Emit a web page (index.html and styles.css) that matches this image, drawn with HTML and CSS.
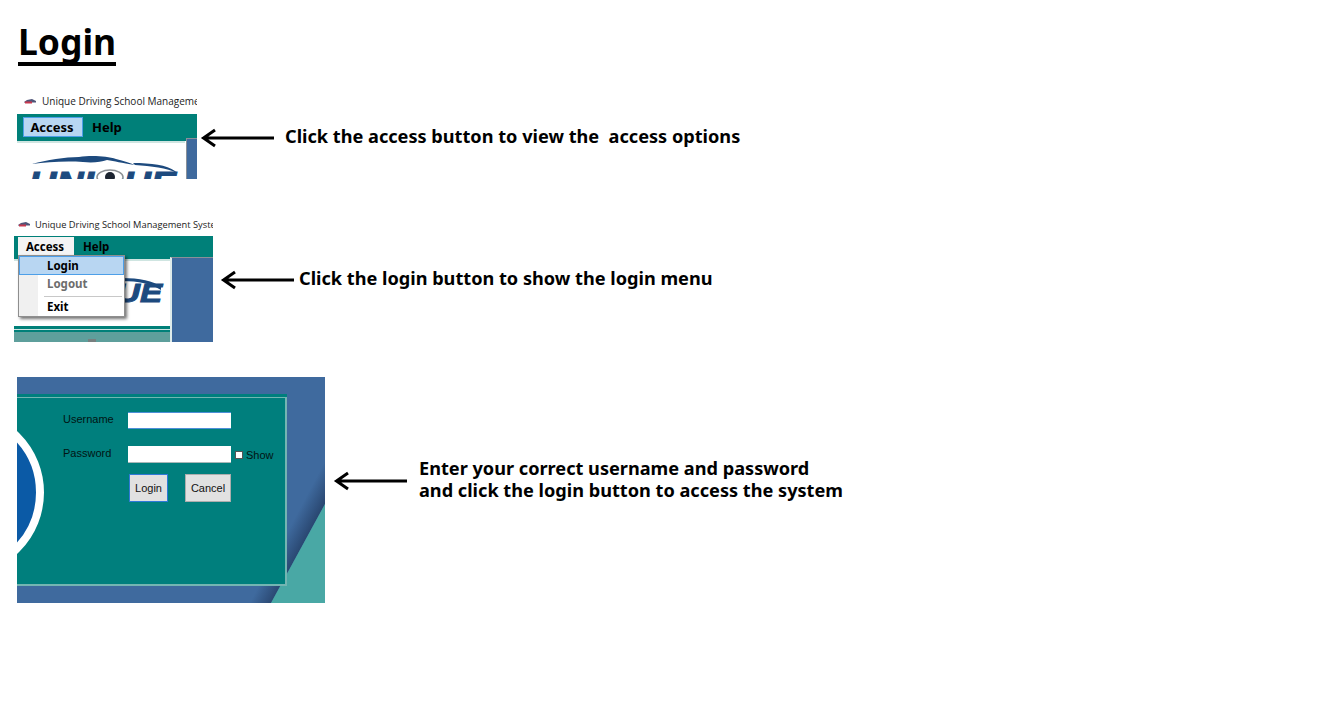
FILE: index.html
```html
<!DOCTYPE html>
<html lang="en">
<head>
<meta charset="utf-8">
<title>Login</title>
<link rel="stylesheet" href="styles.css">
</head>
<body>
<main class="page">
  <h1 class="title">Login</h1>

  <section class="step step-one">
    <div class="shot shot-access">
      <div class="titlebar">
        <svg class="app-icon" width="12" height="5" viewBox="0 0 12 5"><path d="M0 3 3 1 8 0 12 2V3.500H0Z" fill="#4f5578"/><path d="M1 2.500H8V4.500H1Z" fill="#c8384e"/></svg>
        <span class="titlebar-text">Unique Driving School Management System</span>
      </div>
      <div class="menubar">
        <span class="menu-item menu-item-hot">Access</span>
        <span class="menu-item">Help</span>
      </div>
      <div class="workspace">
        <div class="logo-panel">
          <svg class="logo" width="168" height="36" viewBox="0 0 168 36">
            <path d="M15 21C30 17 48 14 62 14C74 12 90 13 99 16C107 18 113 20 118 22C104 20 98 18 90 17C84 19 76 20 66 19C48 18 30 19 15 21Z" fill="#1d4a7e"/>
            <path d="M116 20C134 20 150 22 158 28L160 30C150 25 134 23 118 22Z" fill="#1d4a7e"/>
            <text class="logo-word" x="12" y="51" textLength="147" lengthAdjust="spacingAndGlyphs">UNIQUE</text>
            <ellipse cx="93" cy="34" rx="13" ry="7" fill="#fff" stroke="#8b8f93" stroke-width="1.500"/>
            <circle cx="93" cy="34" r="5" fill="#1c2430"/>
          </svg>
        </div>
        <div class="side-panel side-panel-small"></div>
      </div>
    </div>
    <svg class="arrow arrow-one" width="74" height="20" viewBox="0 0 74 20"><path d="M3 10H74M15 2 3.500 10 15 18" fill="none" stroke="#000" stroke-width="3"/></svg>
    <p class="note note-one">Click the access button to view the&nbsp; access options</p>
  </section>

  <section class="step step-two">
    <div class="shot shot-menu">
      <div class="titlebar titlebar-wide">
        <svg class="app-icon" width="12" height="5" viewBox="0 0 12 5"><path d="M0 3 3 1 8 0 12 2V3.500H0Z" fill="#4f5578"/><path d="M1 2.500H8V4.500H1Z" fill="#c8384e"/></svg>
        <span class="titlebar-text titlebar-text-small">Unique Driving School Management System</span>
      </div>
      <div class="menubar menubar-small">
        <span class="menu-item menu-item-open">Access</span>
        <span class="menu-item menu-item-small">Help</span>
      </div>
      <div class="workspace workspace-tall">
        <div class="left-stack">
          <div class="logo-panel logo-panel-menu">
            <svg class="logo" width="156" height="65" viewBox="0 0 156 65">
              <path d="M108 17C125 17 140 20 147 26L147 29C138 23 124 20 108 20Z" fill="#1d4a7e"/>
              <text class="logo-word logo-word-small" x="102" y="41" textLength="46" lengthAdjust="spacingAndGlyphs">UE</text>
            </svg>
          </div>
          <div class="teal-band"></div>
          <div class="muted-band"><span class="muted-mark"></span></div>
        </div>
        <div class="side-panel side-panel-wide"></div>
      </div>
      <div class="dropdown">
        <div class="drop-item drop-item-hot">Login</div>
        <div class="drop-item drop-item-off">Logout</div>
        <div class="drop-sep"></div>
        <div class="drop-item">Exit</div>
      </div>
    </div>
    <svg class="arrow arrow-two" width="74" height="20" viewBox="0 0 74 20"><path d="M3 10H74M15 2 3.500 10 15 18" fill="none" stroke="#000" stroke-width="3"/></svg>
    <p class="note note-two">Click the login button to show the login menu</p>
  </section>

  <section class="step step-three">
    <div class="shot shot-form">
      <svg class="backdrop" width="308" height="226" viewBox="0 0 308 226">
        <defs>
          <linearGradient id="fold" gradientUnits="userSpaceOnUse" x1="281" y1="176" x2="264" y2="167">
            <stop offset="0" stop-color="#2a4872"/>
            <stop offset="1" stop-color="#3f6a9e"/>
          </linearGradient>
        </defs>
        <path d="M308 127V84L231 226H254Z" fill="url(#fold)"/>
        <path d="M308 127V226H254Z" fill="#49a8a5"/>
      </svg>
      <div class="card">
        <div class="emblem"></div>
        <form class="form-grid">
          <label class="field-label">Username</label>
          <span class="field field-focus"></span>
          <span></span>
          <label class="field-label">Password</label>
          <span class="field field-plain"></span>
          <span class="show"><span class="check"></span>Show</span>
          <span></span>
          <div class="actions">
            <span class="btn btn-default">Login</span>
            <span class="btn btn-cancel">Cancel</span>
          </div>
        </form>
      </div>
    </div>
    <svg class="arrow arrow-three" width="74" height="20" viewBox="0 0 74 20"><path d="M3 10H74M15 2 3.500 10 15 18" fill="none" stroke="#000" stroke-width="3"/></svg>
    <p class="note note-three">Enter your correct username and password<br>and click the login button to access the system</p>
  </section>
</main>
</body>
</html>
```

FILE: styles.css
```css
* { box-sizing: border-box; }
html, body { margin: 0; padding: 0; background: #fff; }
body { font-family: "Noto Sans", sans-serif; color: #000; height: 720px; overflow: hidden; }
.page { padding: 20px 0 0 0; }

.title {
  display: table;
  margin: 0 0 27px 18px;
  font-size: 35.500px;
  line-height: 42px;
  font-weight: 700;
  border-bottom: 4px solid #000;
  padding: 0;
}

.step { display: flex; align-items: center; }
.step-one { margin-left: 17px; height: 86px; }
.step-two { margin-left: 14px; margin-top: 38px; height: 125px; }
.step-three { margin-left: 17px; margin-top: 35px; height: 226px; }

.note { margin: 0; font-size: 18.150px; line-height: 22px; font-weight: 700; white-space: nowrap; }
.arrow { flex: none; }
.arrow-one { margin: 4px 0 0 3px; }
.note-one { margin: 0 0 0 11px; }
.arrow-two { margin-left: 7px; }
.note-two { margin: 0 0 4px 5px; }
.arrow-three { margin: 0 0 18px 8px; }
.note-three { margin: 0 0 22px 12px; }

.shot { position: relative; flex: none; overflow: hidden; background: #fff; font-family: "Open Sans", sans-serif; }
.shot-access { width: 180px; height: 86px; }
.shot-menu { width: 199px; height: 125px; }
.shot-form { width: 308px; height: 226px; background: #3f6a9e; }

.titlebar { height: 21px; display: flex; align-items: center; padding: 0 0 5px 7px; gap: 6px; white-space: nowrap; }
.titlebar-wide { height: 19px; padding: 0 0 4px 4px; gap: 5px; }
.titlebar-text { font-size: 10px; color: #222; }
.titlebar-text-small { font-size: 9.300px; }
.app-icon { flex: none; }

.menubar { height: 27px; background: #008079; display: flex; align-items: flex-start; padding: 3px 0 0 6px; gap: 8px; font-family: "Noto Sans", sans-serif; font-weight: 700; font-size: 13px; }
.menubar-small { height: 21px; padding: 1px 0 0 4px; font-size: 11.500px; gap: 8px; }
.menu-item { height: 20px; line-height: 19px; border: 1px solid transparent; }
.menu-item-hot { width: 60px; padding-right: 2px; text-align: center; background: #b8d6f2; border-color: #4d9fe8; }
.menu-item-open { width: 56px; height: 21px; line-height: 17px; padding-right: 2px; text-align: center; background: #f4f4f4; color: #000; }
.menu-item-small { line-height: 17px; }

.workspace { position: relative; height: 38px; display: flex; }
.workspace-tall { height: 85px; }
.logo-panel { flex: 1; background: #fff; border-top: 2px solid #cfe5e1; overflow: hidden; }
.logo { display: block; }
.logo-word { font-family: "Liberation Sans", sans-serif; font-weight: 700; font-style: italic; font-size: 32px; fill: #1d4a7e; stroke: #1d4a7e; stroke-width: 1px; }
.logo-word-small { font-size: 26px; }
.side-panel { flex: none; background: #3f6a9e; }
.side-panel-small { width: 11px; margin-left: 1px; margin-top: -3px; border: 1px solid #8a9098; border-right: 0; border-bottom: 0; }
.side-panel-wide { width: 43px; border-left: 2px solid #dfecea; border-top: 1px solid #8a9098; }

.left-stack { flex: 1; display: flex; flex-direction: column; background: #008079; padding-top: 2px; }
.logo-panel-menu { flex: none; height: 67px; }
.teal-band { height: 6px; background: #008079; box-shadow: inset 0 -2px 0 #008079, inset 0 -3px 0 #cfe5e1; }
.muted-band { flex: 1; background: #5e9f9c; display: flex; justify-content: center; align-items: flex-end; }
.muted-mark { width: 8px; height: 3px; background: #777f7f; }

.dropdown {
  position: absolute; left: 4px; top: 38px; width: 107px; height: 62px;
  background: linear-gradient(90deg, #f0f0f0 0, #f0f0f0 19px, #fff 19px);
  border: 1px solid #8e8e8e; box-shadow: 2px 2px 3px rgba(0, 0, 0, .55);
  font-family: "Noto Sans", sans-serif; font-weight: 700; font-size: 11.500px;
}
.drop-item { height: 19px; line-height: 18px; padding-left: 28px; }
.drop-item-hot { background: #b8d6f2; border: 1px solid #4d9fe8; padding-left: 27px; }
.drop-item-off { color: #6d6d6d; }
.drop-sep { height: 1px; background: #c8c8c8; margin: 2px 2px 1px 25px; }

.backdrop { position: absolute; left: 0; top: 0; }
.card {
  position: absolute; left: 0; top: 20px; width: 270px; height: 189px;
  background: #007f7d; border: 2px solid #74b5b2; border-left: 0; border-top-width: 1px;
  box-shadow: 0 -3px 0 #007f7d;
  font-family: "Liberation Sans", sans-serif; font-size: 11px; color: #021413;
}
.emblem { position: absolute; left: -140px; top: 11px; width: 167px; height: 167px; border-radius: 50%; background: #0b5aa6; border: 8px solid #fff; clip-path: inset(0 0 0 140px); }
.form-grid {
  position: relative;
  display: grid; grid-template-columns: 65px 103px auto; grid-template-rows: 17px 17px 29px;
  row-gap: 17px; padding: 14px 0 0 46px; align-items: center;
}
.field-label { margin-bottom: 3px; line-height: 14px; }
.field { display: block; height: 17px; background: #fff; }
.field-focus { border-top: 1px solid #4d8fd8; border-bottom: 1px solid #4d8fd8; }
.field-plain { border-bottom: 1px solid #a9b8b8; }
.show { display: flex; align-items: center; gap: 3px; padding-left: 4px; white-space: nowrap; }
.check { width: 8px; height: 8px; background: #fff; border: 1px solid #555; }
.actions { display: flex; gap: 17px; padding: 0 0 0 1px; margin-top: -14px; }
.btn { height: 28px; line-height: 27px; text-align: center; background: #e1e1e1; border: 1px solid #adadad; color: #111; }
.btn-default { width: 39px; border-color: #2f79d8; }
.btn-cancel { width: 46px; }
```
